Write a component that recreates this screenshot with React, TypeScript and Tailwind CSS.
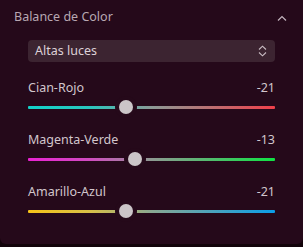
import React from "react";

type SliderProps = {
  label: string;
  value: number;
  gradient: string;
};

function ColorSlider({ label, value, gradient }: SliderProps) {
  const pct = ((value + 100) / 200) * 100;
  return (
    <div className="flex flex-col gap-[4px]">
      <div className="flex h-[16px] items-center justify-between text-[12.5px] leading-[16px] text-[#d2c6cc]">
        <span>{label}</span>
        <span>{value}</span>
      </div>
      <div className="relative h-[14px]">
        <div
          className="absolute left-0 right-0 top-[5.5px] h-[3px] rounded-[1px]"
          style={{ background: gradient }}
        />
        <div
          className="absolute top-0 h-[14px] w-[14px] -translate-x-1/2 rounded-full bg-[#cbc5c8] shadow-[0_0_0_4px_#25091a]"
          style={{ left: `${pct}%` }}
        />
      </div>
    </div>
  );
}

export default function App() {
  return (
    <div
      className="h-[247px] w-[303px] bg-[#12030a]"
      style={{ fontFamily: '"Noto Sans", "Liberation Sans", sans-serif' }}
    >
      <div className="h-[244px] rounded-b-[6px] bg-[#25091a]">
        <div className="flex h-[35px] items-center justify-between pl-[14px] pr-[16px]">
          <span className="text-[12.5px] text-[#b8a8b2]">Balance de Color</span>
          <svg width="10" height="6" viewBox="0 0 10 6" fill="none">
            <path d="M1 5.5L5 1.5L9 5.5" stroke="#c4b4be" strokeWidth="1.2" />
          </svg>
        </div>
        <div className="mx-[28px] mt-[5px] flex h-[22px] items-center justify-between rounded-[4px] bg-[#3c2431] pl-[7px] pr-[8px]">
          <span className="text-[12.5px] text-[#ddd1d7]">Altas luces</span>
          <svg width="9" height="12" viewBox="0 0 9 12" fill="none">
            <path d="M1 4.5L4.5 1.2L8 4.5" stroke="#c9bcc3" strokeWidth="1.1" />
            <path d="M1 7.5L4.5 10.8L8 7.5" stroke="#c9bcc3" strokeWidth="1.1" />
          </svg>
        </div>
        <div className="mt-[18px] flex flex-col gap-[18px] px-[28px]">
          <ColorSlider
            label="Cian-Rojo"
            value={-21}
            gradient="linear-gradient(to right, #12d2ca 0%, #2ac6be 25%, #8c9a96 50%, #f0404a 100%)"
          />
          <ColorSlider
            label="Magenta-Verde"
            value={-13}
            gradient="linear-gradient(to right, #ea22d2 0%, #d04cc0 25%, #8e9a92 50%, #10e244 100%)"
          />
          <ColorSlider
            label="Amarillo-Azul"
            value={-21}
            gradient="linear-gradient(to right, #f6c418 0%, #d8c048 25%, #8aa892 50%, #0a9ee8 100%)"
          />
        </div>
      </div>
    </div>
  );
}
